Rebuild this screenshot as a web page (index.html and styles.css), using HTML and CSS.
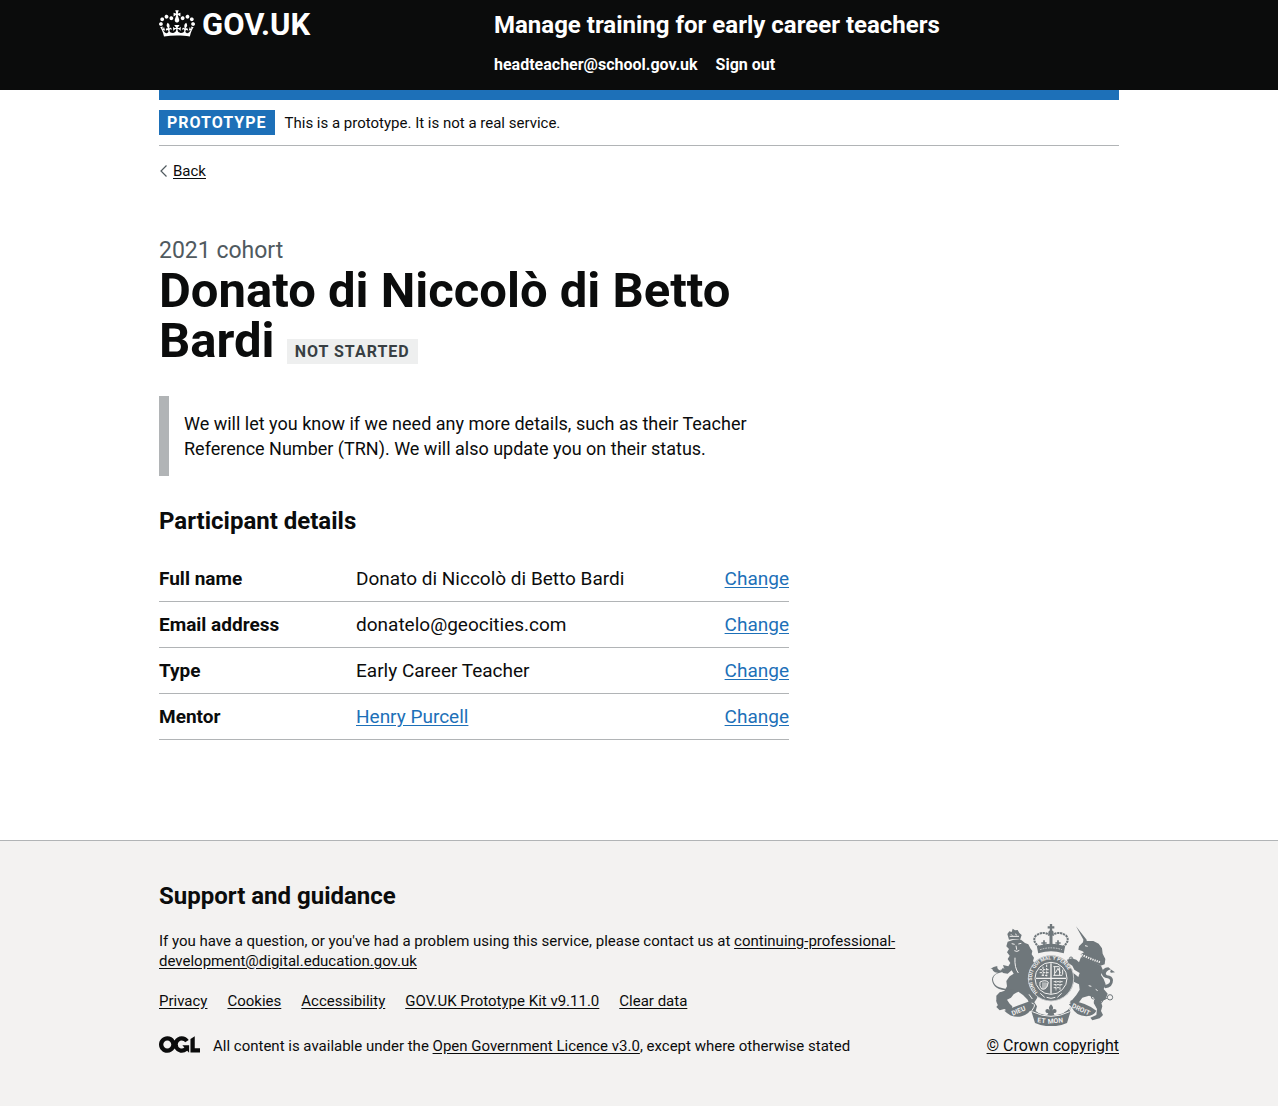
FILE: index.html
```html
<!DOCTYPE html>
<html lang="en">
<head>
<meta charset="utf-8">
<meta name="viewport" content="width=device-width, initial-scale=1">
<title>Donato di Niccolò di Betto Bardi - Manage training for early career teachers</title>
<link rel="stylesheet" href="styles.css">
</head>
<body>
<header class="header">
  <div class="container header-grid">
    <a class="logo" href="#">
      <svg class="logo-crown" viewBox="0 0 132 97" width="36" height="30" aria-hidden="true" focusable="false"><path fill="currentColor" fill-rule="evenodd" d="M25 30.2c3.5 1.5 7.7-.2 9.1-3.7 1.5-3.6-.2-7.8-3.9-9.2-3.6-1.4-7.6.3-9.1 3.9-1.4 3.5.3 7.5 3.9 9zM9 39.5c3.6 1.5 7.8-.2 9.2-3.7 1.5-3.6-.2-7.8-3.9-9.1-3.6-1.5-7.6.2-9.1 3.8-1.4 3.5.3 7.5 3.8 9zM4.4 57.2c3.5 1.5 7.7-.2 9.1-3.8 1.5-3.6-.2-7.7-3.9-9.1-3.5-1.5-7.6.3-9.1 3.8-1.4 3.5.3 7.6 3.9 9.1zm38.3-21.4c3.5 1.5 7.7-.2 9.1-3.8 1.5-3.6-.2-7.7-3.9-9.1-3.6-1.5-7.6.3-9.1 3.8-1.3 3.6.4 7.7 3.9 9.1zm64.4-5.6c-3.6 1.5-7.8-.2-9.1-3.7-1.5-3.6.2-7.8 3.8-9.2 3.6-1.4 7.7.3 9.2 3.9 1.3 3.5-.4 7.5-3.9 9zm15.9 9.3c-3.6 1.5-7.7-.2-9.1-3.7-1.5-3.6.2-7.8 3.7-9.1 3.6-1.5 7.7.2 9.2 3.8 1.5 3.5-.3 7.5-3.8 9zm4.7 17.7c-3.6 1.5-7.8-.2-9.2-3.8-1.5-3.6.2-7.7 3.9-9.1 3.6-1.5 7.7.3 9.2 3.8 1.3 3.5-.4 7.6-3.9 9.1zM89.3 35.8c-3.6 1.5-7.8-.2-9.2-3.8-1.4-3.6.2-7.7 3.9-9.1 3.6-1.5 7.7.3 9.2 3.8 1.4 3.6-.3 7.7-3.9 9.1zM69.7 17.7l8.9 4.7V9.3l-8.9 2.8c-.2-.3-.5-.6-.9-.9L72.4 0H59.6l3.5 11.2c-.3.3-.6.5-.9.9l-8.8-2.8v13.1l8.8-4.7c.3.3.6.7.9.9l-5 15.4v.1c-.2.8-.4 1.6-.4 2.4 0 4.1 3.1 7.5 7 8.1h.2c.3 0 .7.1 1 .1.4 0 .7 0 1-.1h.2c4-.6 7.1-4.1 7.1-8.1 0-.8-.1-1.7-.4-2.4V34l-5.1-15.4c.4-.2.7-.6 1-.9zM66 92.8c16.9 0 32.8 1.1 47.1 3.2 4-16.9 8.9-26.7 14-33.5l-9.6-3.4c1 4.9 1.1 7.2 0 10.2-1.5-1.4-3-4.3-4.2-8.7L108.6 76c2.8-2 5-3.2 7.5-3.3-4.4 9.4-10 11.9-13.6 11.2-4.3-.8-6.3-4.6-5.6-7.9 1-4.7 5.7-5.9 8-.5 4.3-8.7-3-11.4-7.6-8.8 7.1-7.2 7.9-13.5 2.1-21.1-8 6.1-8.1 12.3-4.5 20.8-4.7-5.4-12.1-2.5-9.5 6.2 3.4-5.2 7.9-2 7.2 3.1-.6 4.3-6.4 7.8-13.5 7.2-10.3-.9-10.9-8-11.2-13.8 2.5-.5 7.1 1.8 11 7.3L80.2 60c-4.1 4.4-8 5.3-12.3 5.4 1.4-4.4 8-11.6 8-11.6H55.5s6.4 7.2 7.9 11.6c-4.2-.1-8-1-12.3-5.4l1.4 16.4c3.9-5.5 8.5-7.7 10.9-7.3-.3 5.8-.9 12.8-11.1 13.8-7.2.6-12.9-2.9-13.5-7.2-.7-5 3.8-8.3 7.1-3.1 2.7-8.7-4.6-11.6-9.4-6.2 3.7-8.5 3.6-14.7-4.6-20.8-5.8 7.6-5 13.9 2.2 21.1-4.7-2.6-11.9.1-7.7 8.8 2.3-5.5 7.1-4.2 8.1.5.7 3.3-1.3 7.1-5.7 7.9-3.5.7-9-1.8-13.5-11.2 2.5.1 4.7 1.3 7.5 3.3l-4.7-15.4c-1.2 4.4-2.7 7.2-4.3 8.7-1.1-3-.9-5.3 0-10.2l-9.5 3.4c5 6.9 9.9 16.7 14 33.5 14.8-2.1 30.8-3.2 47.7-3.2z"/></svg>
      <span>GOV.UK</span>
    </a>
    <div>
      <a class="service-name" href="#">Manage training for early career teachers</a>
      <nav class="header-nav" aria-label="Account">
        <a href="#">headteacher@school.gov.uk</a>
        <a href="#">Sign out</a>
      </nav>
    </div>
  </div>
</header>

<div class="container">
  <div class="phase-banner">
    <strong class="tag">PROTOTYPE</strong>
    <span>This is a prototype. It is not a real service.</span>
  </div>
  <a class="back-link" href="#"><svg width="14" height="20" viewBox="0 0 14 20" aria-hidden="true"><path d="M7.500 4.500 2 10l5.500 5.500" fill="none" stroke="#505a5f" stroke-width="1.200"/></svg><span>Back</span></a>

  <main class="main">
    <p class="caption">2021 cohort</p>
    <div class="title">
      <h1>Donato di Niccolò di Betto Bardi</h1>
      <strong class="tag tag-grey">NOT STARTED</strong>
    </div>
    <p class="inset">We will let you know if we need any more details, such as their Teacher Reference Number (TRN). We will also update you on their status.</p>
    <h2 class="subtitle">Participant details</h2>
    <dl class="summary">
      <div class="summary-row"><dt>Full name</dt><dd>Donato di Niccolò di Betto Bardi</dd><dd class="action"><a href="#">Change</a></dd></div>
      <div class="summary-row"><dt>Email address</dt><dd>donatelo@geocities.com</dd><dd class="action"><a href="#">Change</a></dd></div>
      <div class="summary-row"><dt>Type</dt><dd>Early Career Teacher</dd><dd class="action"><a href="#">Change</a></dd></div>
      <div class="summary-row"><dt>Mentor</dt><dd><a href="#">Henry Purcell</a></dd><dd class="action"><a href="#">Change</a></dd></div>
    </dl>
  </main>
</div>

<footer class="footer">
  <div class="container footer-grid">
    <div class="footer-main">
      <h2 class="subtitle">Support and guidance</h2>
      <p class="contact">If you have a question, or you've had a problem using this service, please contact us at <a href="#">continuing-professional-development@digital.education.gov.uk</a></p>
      <ul class="footer-links">
        <li><a href="#">Privacy</a></li>
        <li><a href="#">Cookies</a></li>
        <li><a href="#">Accessibility</a></li>
        <li><a href="#">GOV.UK Prototype Kit v9.11.0</a></li>
        <li><a href="#">Clear data</a></li>
      </ul>
      <div class="licence">
        <svg width="41" height="17" viewBox="0 0 483.2 195.7" aria-hidden="true"><path fill="currentColor" d="M421.5 142.8V.1l-50.7 32.3v161.1h112.4v-50.7zm-122.3-9.6A47.12 47.12 0 0 1 221 97.8c0-26 21.1-47.1 47.1-47.1 16.7 0 31.4 8.7 39.7 21.8l42.7-27.2A97.63 97.63 0 0 0 268.1 0c-36.500 0-68.300 20.100-85.100 49.700A98 98 0 0 0 97.8 0C43.9 0 0 43.9 0 97.800s43.900 97.800 97.800 97.800c36.500 0 68.300-20.100 85.100-49.700a97.760 97.760 0 0 0 149.600 25.400l19.400 22.200h3v-87.800h-80l24.300 27.500zM97.800 145c-26 0-47.100-21.100-47.100-47.100s21.100-47.100 47.100-47.100 47.100 21.100 47.100 47.100S123.800 145 97.800 145"/></svg>
        <span>All content is available under the <a href="#">Open Government Licence v3.0</a>, except where otherwise stated</span>
      </div>
    </div>
    <a class="copyright" href="#">
      <svg width="125" height="102" viewBox="33 27 375 306" aria-hidden="true">
        <defs>
          <path id="garter" d="M178 233A57 57 0 1 1 254 233"/>
        </defs>
        <g fill="#6f777b">
          <!-- lion -->
          <path d="M90 74l-5-17 6-8 7 2 3-10 7 5 8-1 5 9 7 6-5 15q-17-5-33-1z"/>
          <path d="M86 80L104 74 126 74 138 84 148 88 154 100 160 108 158 118 165 128 162 138 168 148 160 158 158 176 154 192 158 210 168 226 178 236 174 250 166 262 174 274 170 288 160 292 150 284 152 268 146 254 132 240 118 230 104 238 96 248 84 254 92 266 100 274 98 284 86 288 76 282 62 286 52 276 60 266 52 256 66 246 62 234 76 228 84 214 82 198 92 184 104 176 98 166 86 176 72 174 64 164 76 162 72 150 88 154 94 144 86 132 92 122 84 112 90 102 82 94z"/>
          <path d="M62 232l-10 10 0 18 8 18 20 2 10-10-16-8 4-14 16-8 10-18zM160 196l28-18-4-12-26 16z"/>
          <path d="M90 222Q42 220 42 192q2-16 26-20 12-4 5-14-6 2-4 9-16-1-14-13-8-2-21 8 7-2 8 5 6 7 15 6-18 7-18 21 3 32 51 32z"/>
          <!-- unicorn -->
          <path d="M291 34l33 42-7 5zM298 104l2-10 12-12 2-14 9 10 20 0 16 8 10 14 2 16 8 16-2 16-12 4-30-12-24-10-6-12 10-6-6-4z"/>
          <path d="M306 126L344 142 366 152 372 166 366 180 374 192 380 208 374 222 386 236 380 252 366 260 370 274 366 288 372 300 362 310 340 316 334 308 352 300 354 282 344 264 348 250 330 242 310 248 300 262 286 268 272 268 280 254 292 240 302 224 300 208 284 200 272 186 268 172 286 176 298 186 302 174 286 164 280 152 268 144 264 134 278 130 292 134 300 142z"/>
          <path d="M378 220q24-2 24-25-1-12-18-14-7-4 0-12 6-6 12-5-5 8 1 9 6-1 11-1l-11-8-9-7q-18 2-20 17 2 14 18 16 9 3 7 10-2 9-20 10z"/>
          <!-- scrolls -->
          <path d="M76 287l78-29 12 12-10 12q-6 16-28 22-28 7-52-17zM276 256q46 8 76 31-6 14-30 17-32-2-42-24l-10-12z"/>
          <path d="M158 276q12 22 58 26 46-4 58-26l0 16-10 32q-48 20-96 0l-10-32z"/>
          <circle cx="216" cy="190" r="69"/>
        </g>
        <g fill="none" stroke="#6f777b" stroke-width="3">
          <circle cx="393" cy="247" r="8"/><circle cx="365" cy="257" r="6"/><circle cx="343" cy="246" r="6"/><circle cx="352" cy="259" r="6"/><path d="M371 256l14-7"/>
          <circle cx="276" cy="131" r="5"/><circle cx="291" cy="151" r="5"/>
        </g>
        <!-- crown -->
        <g fill="none" stroke="#6f777b" stroke-width="6">
          <path d="M181 97Q156 76 172 61q22-14 40 0M251 97q25-21 9-36-22-14-40 0" stroke-dasharray="7 2"/>
          <path d="M216 55v46" stroke-width="9"/>
          <path d="M177 96q39-14 78 0l-3 15q-36-11-72 0z" fill="#6f777b"/>
          <path d="M216 27v22M206 37h20" stroke-width="7"/>
          <path d="M195 76v16M187 84h16M237 76v16M229 84h16" stroke-width="5"/>
        </g>
        <circle cx="216" cy="54" r="8" fill="#6f777b"/>
        <path d="M183 104q33-11 66 0" fill="none" stroke="#f3f2f1" stroke-width="2" stroke-dasharray="5 3"/>
        <!-- highlights on the supporters, garter rims -->
        <g fill="none" stroke="#f3f2f1" stroke-width="3">
          <path d="M98 86l9 2M118 87l9-2M111 92l2 12M106 107q8 5 15-1M92 64h28M96 58l4 4M110 56l2 5"/>
          <path d="M108 128q-2 30 10 46M318 92l8 2M329 212l8 2M350 223l6 4M150 238l10 14"/>
          <path d="M307 119q30 14 58 23" stroke-width="6" stroke-dasharray="4 3"/>
          <circle cx="216" cy="190" r="68" stroke-width="2"/><circle cx="216" cy="190" r="48"/>
        </g>
        <!-- quartered arms -->
        <g stroke="#f3f2f1" fill="none" stroke-width="3">
          <path d="M216 145v91M171 190h90" stroke-width="4"/>
          <path d="M182 164h27M182 173h27M188 181h20M192 155v30M203 149v35" stroke-dasharray="7 3"/>
          <path d="M223 155h18M223 181h27M227 155v27M242 157v23M229 174l8-14 7 14M251 164v15"/>
          <path d="M183 201q17-8 25 1-5 25-20 20-8-9-5-21zM192 202v20M198 202v19M204 203v12"/>
          <path d="M224 200h27M224 209h26M224 218h20M231 197v31M243 197v28" stroke-dasharray="7 3"/>
          <path d="M184 235l13 12M248 235l-13 12M203 247q13 6 26 0"/>
        </g>
        <!-- fleur-de-lis and scroll folds -->
        <g fill="#6f777b" stroke="#f3f2f1" stroke-width="3">
          <path d="M178 266h76v28q-38 12-76 0z" fill="#f3f2f1" stroke="none"/>
          <path d="M216 268q-11 10-3 19-5-8-13-3-3 10 8 10-3 6-5 9h26q-4-3-5-9 11 0 8-10-9-5-13 3 8-9-3-19z" stroke="none"/>
          <path d="M160 290q56 28 112 0M158 264q13 3 6 14l-8 13M275 264q-13 3-6 14l8 13" fill="none"/>
        </g>
        <g class="motto">
          <text><textPath href="#garter" startOffset="2">HONI SOIT QUI MAL Y PENSE</textPath></text>
          <text transform="translate(101 302) rotate(-23)" font-size="20">DIEU</text>
          <text transform="translate(175 322) rotate(5)" font-size="20">ET</text>
          <text transform="translate(207 326) rotate(-5)" font-size="20">MON</text>
          <text transform="translate(277 277) rotate(25)" font-size="20">DROIT</text>
        </g>
      </svg>
      <span>© Crown copyright</span>
    </a>
  </div>
</footer>
</body>
</html>
```
FILE: styles.css
```css
* { box-sizing: border-box; }
body {
  margin: 0;
  color: #0b0c0c;
  background: #fff;
  font: 15px/20px Roboto, "Liberation Sans", sans-serif;
}
h1, h2, p, ul, dl, dd { margin: 0; padding: 0; }
.container { max-width: 960px; margin: 0 auto; }

.header { background: #0b0c0c; color: #fff; padding: 10px 0 15px; }
.header a { color: #fff; text-decoration: none; font-weight: 700; }
.header-grid { display: grid; grid-template-columns: 1fr 2fr; gap: 15px; }
.header-grid > div { padding-left: 5px; }
.header-grid .logo { display: flex; gap: 7px; height: 30px; font-size: 31px; line-height: 30px; }
.logo-crown { flex: none; height: 27px; }
.service-name { display: block; font-size: 24px; line-height: 30px; }
.header-nav { display: flex; gap: 18px; margin-top: 15px; font-size: 16px; }

.phase-banner {
  display: flex;
  align-items: center;
  gap: 10px;
  padding: 10px 0;
  border-top: 10px solid #1d70b8;
  border-bottom: 1px solid #b1b4b6;
}
.tag {
  display: inline-block;
  padding: 5px 8px 4px;
  background: #1d70b8;
  color: #fff;
  font-size: 16px;
  line-height: 16px;
  letter-spacing: 1px;
}
.tag-grey { background: #eeefef; color: #383f43; }
.back-link { display: inline-flex; margin: 15px 0; color: inherit; text-decoration: none; }
.back-link span { text-decoration: underline; text-underline-offset: 2px; }

.main { max-width: 630px; padding: 40px 0 100px; }
.title { font-size: 49px; line-height: 50px; margin-bottom: 30px; }
.title h1 { display: inline; font-size: inherit; }
.caption { color: #505a5f; font-size: 23px; line-height: 30px; }
.inset { border-left: 10px solid #b1b4b6; padding: 15px; font-size: 18px; line-height: 25px; }
.subtitle { font-size: 24px; line-height: 30px; margin-bottom: 20px; }
.main .subtitle { margin-top: 30px; }
.summary { font-size: 19px; line-height: 25px; }
.summary-row {
  display: grid;
  grid-template-columns: 177px 1fr auto;
  column-gap: 20px;
  padding: 10px 0;
  border-bottom: 1px solid #b1b4b6;
}
.summary dt { font-weight: 700; }
.main a { color: #1d70b8; text-underline-offset: 2px; }

.footer { background: #f3f2f1; border-top: 1px solid #b1b4b6; padding: 40px 0 50px; }
.footer a { color: inherit; text-underline-offset: 2px; }
.footer-grid { display: flex; align-items: flex-end; justify-content: space-between; gap: 30px; }
.footer-main { flex: 0 1 770px; }
.footer-links { display: flex; flex-wrap: wrap; gap: 20px; margin: 20px 0 25px; list-style: none; }
.licence { display: flex; gap: 13px; }
.copyright { display: flex; flex: none; flex-direction: column; align-items: center; gap: 10px; font-size: 16px; white-space: nowrap; }
.motto { fill: #f3f2f1; font: 700 15px Roboto, "Liberation Sans", sans-serif; }
```
